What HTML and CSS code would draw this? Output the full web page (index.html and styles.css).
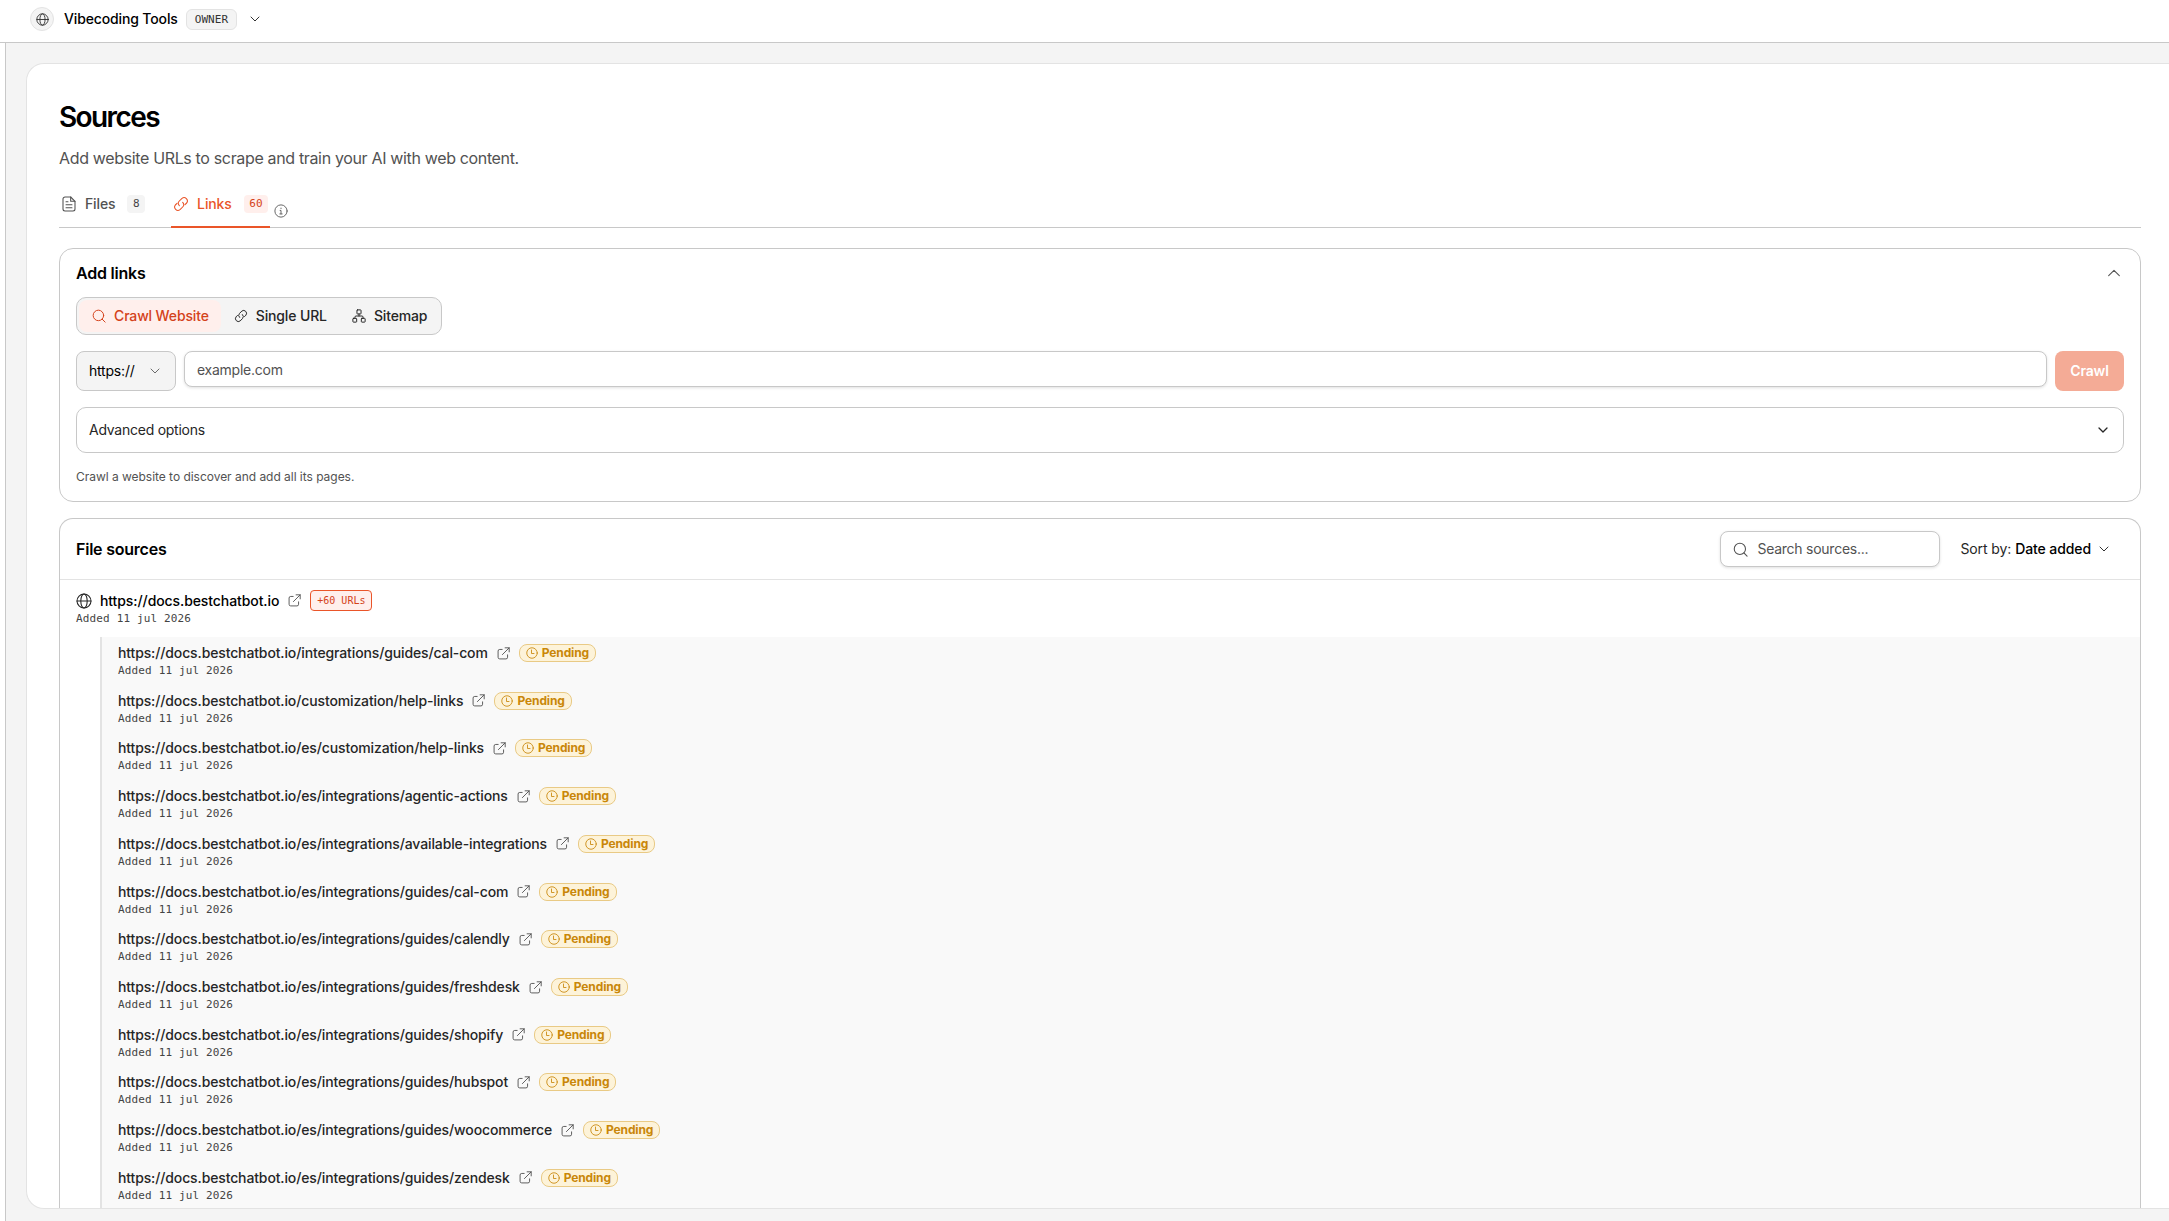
FILE: index.html
```html
<!DOCTYPE html>
<html lang="en">
<head>
<meta charset="utf-8">
<title>Sources</title>
<link rel="stylesheet" href="styles.css">
</head>
<body>
<svg class="sprite" aria-hidden="true">
  <symbol id="globe" viewBox="0 0 24 24"><circle cx="12" cy="12" r="10.500"/><ellipse cx="12" cy="12" rx="4.8" ry="10.500"/><path d="M1.500 12h21"/></symbol>
  <symbol id="down" viewBox="0 0 24 24"><path d="m4 8 8 8 8-8"/></symbol>
  <symbol id="up" viewBox="0 0 24 24"><path d="m4 16 8-8 8 8"/></symbol>
  <symbol id="file" viewBox="0 0 24 24"><path d="M14.5 1.5H6a3 3 0 0 0-3 3v15a3 3 0 0 0 3 3h12a3 3 0 0 0 3-3V8z"/><path d="M14.5 1.5V8H21M7.500 8.500h3M7.500 13h9M7.500 17.500h9"/></symbol>
  <symbol id="link" viewBox="0 0 24 24"><path d="M9.500 14.500a5 5 0 0 1 0-7l4-4a5 5 0 0 1 7 7l-2.500 2.500"/><path d="M14.500 9.500a5 5 0 0 1 0 7l-4 4a5 5 0 0 1-7-7L6 11"/></symbol>
  <symbol id="info" viewBox="0 0 24 24"><circle cx="12" cy="12" r="10.500"/><path d="M10.500 11H12v6M10 17h4M12 7v1"/></symbol>
  <symbol id="search" viewBox="0 0 24 24"><circle cx="11" cy="11" r="9"/><path d="m17.500 17.500 5 5"/></symbol>
  <symbol id="sitemap" viewBox="0 0 24 24"><rect x="8.500" y="1.500" width="7" height="7" rx="1"/><rect x="1.500" y="16" width="6.500" height="6.500" rx="1"/><rect x="16" y="16" width="6.500" height="6.500" rx="1"/><path d="M12 8.500V12M5 16v-2a2 2 0 0 1 2-2h10a2 2 0 0 1 2 2v2"/></symbol>
  <symbol id="external" viewBox="0 0 24 24"><path d="M15 1.500h7.500V9M22.500 1.500 10 14M9.500 4.500H5a3 3 0 0 0-3 3V19a3 3 0 0 0 3 3h11.500a3 3 0 0 0 3-3v-4.500"/></symbol>
  <symbol id="clock" viewBox="0 0 24 24"><circle cx="12" cy="12" r="10.500"/><path d="M11 6v7h5"/></symbol>
</svg>

<header class="topbar">
  <span class="avatar"><svg class="icon i13"><use href="#globe"/></svg></span>
  <span class="workspace">Vibecoding Tools</span>
  <span class="role">OWNER</span>
  <svg class="icon i12 dark"><use href="#down"/></svg>
</header>

<div class="shell">
  <main class="panel">
    <h1>Sources</h1>
    <p class="subtitle">Add website URLs to scrape and train your AI with web content.</p>

    <nav class="tabs">
      <a class="tab"><svg class="icon i16"><use href="#file"/></svg><span>Files</span><b class="count">8</b></a>
      <a class="tab active"><svg class="icon i16"><use href="#link"/></svg><span>Links</span><b class="count">60</b></a>
      <svg class="icon info"><use href="#info"/></svg>
    </nav>

    <section class="card add">
      <div class="card-title"><h2>Add links</h2><svg class="icon i16 muted"><use href="#up"/></svg></div>
      <div class="segments">
        <button class="segment active"><svg class="icon i14"><use href="#search"/></svg>Crawl Website</button>
        <button class="segment"><svg class="icon i14"><use href="#link"/></svg>Single URL</button>
        <button class="segment"><svg class="icon i14"><use href="#sitemap"/></svg>Sitemap</button>
      </div>
      <div class="url-row">
        <div class="protocol">https://<svg class="icon i12 muted"><use href="#down"/></svg></div>
        <input class="field" type="text" placeholder="example.com">
        <button class="crawl">Crawl</button>
      </div>
      <div class="advanced">Advanced options<svg class="icon i12 bold"><use href="#down"/></svg></div>
      <p class="hint">Crawl a website to discover and add all its pages.</p>
    </section>

    <section class="card list">
      <div class="list-head">
        <h2>File sources</h2>
        <div class="tools">
          <label class="search"><svg class="icon i15 muted"><use href="#search"/></svg><input type="text" placeholder="Search sources..."></label>
          <div class="sort"><span>Sort by: <b>Date added</b></span><svg class="icon i12 dark"><use href="#down"/></svg></div>
        </div>
      </div>
      <div class="group">
        <div class="line"><svg class="icon i16"><use href="#globe"/></svg><span class="root">https://docs.bestchatbot.io</span><svg class="icon i13 muted ext"><use href="#external"/></svg><span class="urls">+60 URLs</span></div>
        <div class="date">Added 11 jul 2026</div>
      </div>
      <ul class="children">
        <li><div class="line"><span>https://docs.bestchatbot.io/integrations/guides/cal-com</span><svg class="icon i13 muted ext"><use href="#external"/></svg><span class="pending"><svg class="icon i12"><use href="#clock"/></svg>Pending</span></div><div class="date">Added 11 jul 2026</div></li>
        <li><div class="line"><span>https://docs.bestchatbot.io/customization/help-links</span><svg class="icon i13 muted ext"><use href="#external"/></svg><span class="pending"><svg class="icon i12"><use href="#clock"/></svg>Pending</span></div><div class="date">Added 11 jul 2026</div></li>
        <li><div class="line"><span>https://docs.bestchatbot.io/es/customization/help-links</span><svg class="icon i13 muted ext"><use href="#external"/></svg><span class="pending"><svg class="icon i12"><use href="#clock"/></svg>Pending</span></div><div class="date">Added 11 jul 2026</div></li>
        <li><div class="line"><span>https://docs.bestchatbot.io/es/integrations/agentic-actions</span><svg class="icon i13 muted ext"><use href="#external"/></svg><span class="pending"><svg class="icon i12"><use href="#clock"/></svg>Pending</span></div><div class="date">Added 11 jul 2026</div></li>
        <li><div class="line"><span>https://docs.bestchatbot.io/es/integrations/available-integrations</span><svg class="icon i13 muted ext"><use href="#external"/></svg><span class="pending"><svg class="icon i12"><use href="#clock"/></svg>Pending</span></div><div class="date">Added 11 jul 2026</div></li>
        <li><div class="line"><span>https://docs.bestchatbot.io/es/integrations/guides/cal-com</span><svg class="icon i13 muted ext"><use href="#external"/></svg><span class="pending"><svg class="icon i12"><use href="#clock"/></svg>Pending</span></div><div class="date">Added 11 jul 2026</div></li>
        <li><div class="line"><span>https://docs.bestchatbot.io/es/integrations/guides/calendly</span><svg class="icon i13 muted ext"><use href="#external"/></svg><span class="pending"><svg class="icon i12"><use href="#clock"/></svg>Pending</span></div><div class="date">Added 11 jul 2026</div></li>
        <li><div class="line"><span>https://docs.bestchatbot.io/es/integrations/guides/freshdesk</span><svg class="icon i13 muted ext"><use href="#external"/></svg><span class="pending"><svg class="icon i12"><use href="#clock"/></svg>Pending</span></div><div class="date">Added 11 jul 2026</div></li>
        <li><div class="line"><span>https://docs.bestchatbot.io/es/integrations/guides/shopify</span><svg class="icon i13 muted ext"><use href="#external"/></svg><span class="pending"><svg class="icon i12"><use href="#clock"/></svg>Pending</span></div><div class="date">Added 11 jul 2026</div></li>
        <li><div class="line"><span>https://docs.bestchatbot.io/es/integrations/guides/hubspot</span><svg class="icon i13 muted ext"><use href="#external"/></svg><span class="pending"><svg class="icon i12"><use href="#clock"/></svg>Pending</span></div><div class="date">Added 11 jul 2026</div></li>
        <li><div class="line"><span>https://docs.bestchatbot.io/es/integrations/guides/woocommerce</span><svg class="icon i13 muted ext"><use href="#external"/></svg><span class="pending"><svg class="icon i12"><use href="#clock"/></svg>Pending</span></div><div class="date">Added 11 jul 2026</div></li>
        <li><div class="line"><span>https://docs.bestchatbot.io/es/integrations/guides/zendesk</span><svg class="icon i13 muted ext"><use href="#external"/></svg><span class="pending"><svg class="icon i12"><use href="#clock"/></svg>Pending</span></div><div class="date">Added 11 jul 2026</div></li>
      </ul>
    </section>
  </main>
</div>
</body>
</html>
```
FILE: styles.css
```css
* { box-sizing: border-box; }

:root {
  --line: #c8c8c8;
  --soft-line: #e3e3e3;
  --surface: #f4f4f4;
  --accent: #ea5529;
  --accent-text: #d4421a;
  --accent-soft: #ffefec;
  --text: #262626;
  --muted: #525252;
  --mono: "DejaVu Sans Mono", "Liberation Mono", monospace;
}

body {
  margin: 0;
  height: 1221px;
  overflow: hidden;
  display: flex;
  flex-direction: column;
  background: #fff;
  color: var(--text);
  font: 500 14px/20px Inter, sans-serif;
  letter-spacing: -0.14px;
}

h1, h2, p, ul { margin: 0; padding: 0; }
button, input { font: inherit; color: inherit; letter-spacing: inherit; }
.sprite { display: none; }

.icon { width: 14px; height: 14px; flex: none; fill: none; stroke: currentColor; stroke-width: 1.7; stroke-linecap: round; stroke-linejoin: round; }
.i12 { width: 12px; height: 12px; }
.i13 { width: 13px; height: 13px; }
.i15 { width: 15px; height: 15px; }
.i16 { width: 16px; height: 16px; stroke-width: 1.6; }
.muted { color: var(--muted); }
.dark { color: #333; stroke-width: 2; }
.bold { stroke-width: 2.6; }

.topbar { height: 43px; flex: none; display: flex; align-items: center; padding: 0 0 4px 30px; border-bottom: 1px solid var(--line); color: #000; }
.avatar { width: 24px; height: 24px; display: flex; align-items: center; justify-content: center; border: 1px solid var(--soft-line); border-radius: 50%; background: var(--surface); color: #333; }
.workspace { margin-left: 10px; }
.role { height: 21px; margin: 0 12px 0 8px; padding: 0 8px; border: 1px solid var(--soft-line); border-radius: 6px; background: var(--surface); color: #333; font: 400 11px/19px var(--mono); letter-spacing: 0.1px; }

.shell { flex: 1; min-height: 0; margin-left: 5px; padding: 20px 0 12px 20px; border-left: 1px solid var(--line); background: var(--surface); }
.panel { height: 1146px; overflow: hidden; padding: 35px 28px 0 32px; border: 1px solid var(--soft-line); border-right: 0; border-radius: 18px 0 0 18px; background: #fff; }

h1 { color: #000; font-size: 28px; font-weight: 600; line-height: 36px; letter-spacing: -1.6px; }
.subtitle { margin-top: 11px; color: var(--muted); font-size: 16px; font-weight: 400; line-height: 24px; letter-spacing: -0.345px; }

.tabs { height: 43px; margin-top: 15px; display: flex; border-bottom: 1px solid var(--line); }
.tab { height: 43px; display: flex; align-items: center; padding: 0 2px 6px; margin-right: 24px; color: var(--muted); }
.tab span { margin: 0 12px 0 8px; }
.tab.active { color: var(--accent); padding-bottom: 4px; border-bottom: 2px solid var(--accent); margin-right: 4px; }
.count { height: 18px; padding: 0 5.5px; border-radius: 4px; background: var(--surface); color: #444; font: 400 11px/18px var(--mono); letter-spacing: 0.1px; }
.active .count { background: var(--accent-soft); color: var(--accent-text); }
.info { margin-top: 19px; color: #666; }

.card { border: 1px solid var(--line); border-radius: 14px; }
.add { height: 254px; margin-top: 20px; padding: 14px 16px; }
h2 { color: #000; font-size: 16px; font-weight: 600; line-height: 20px; letter-spacing: -0.22px; }
.card-title { display: flex; justify-content: space-between; align-items: center; padding-right: 2px; }

.segments { width: max-content; height: 38px; margin-top: 14px; padding: 2px; display: flex; border: 1px solid var(--line); border-radius: 10px; background: var(--surface); }
.segment { display: flex; align-items: center; gap: 8px; padding: 0 12px 0 13px; border: 0; border-radius: 8px; background: none; }
.segment.active { background: var(--accent-soft); color: var(--accent-text); }

.url-row { margin-top: 16px; display: flex; gap: 8px; }
.protocol { width: 100px; height: 40px; display: flex; align-items: center; justify-content: space-between; padding: 0 14px 0 12px; border: 1px solid var(--line); border-radius: 8px; background: var(--surface); color: #000; font-weight: 400; letter-spacing: -0.2px; }
.field, .search { border: 1px solid var(--line); border-radius: 8px; background: #fff; box-shadow: 0 1px 3px #0000001f; font-weight: 400; letter-spacing: -0.25px; }
.field { flex: 1; height: 36px; padding: 0 12px; }
::placeholder { color: var(--muted); opacity: 1; }
.crawl { width: 69px; height: 40px; border: 0; border-radius: 8px; background: #f4ab96; color: #fff; font-weight: 600; }
.advanced { height: 46px; margin-top: 16px; padding: 0 14px 0 12px; display: flex; align-items: center; justify-content: space-between; border: 1px solid var(--line); border-radius: 10px; font-weight: 400; letter-spacing: -0.25px; }
.hint { margin-top: 15px; color: var(--muted); font-size: 12px; font-weight: 400; line-height: 18px; letter-spacing: -0.03px; }

.list { margin-top: 16px; border-bottom: 0; border-radius: 14px 14px 0 0; }
.list-head { height: 61px; padding: 0 16px; display: flex; align-items: center; justify-content: space-between; border-bottom: 1px solid var(--soft-line); }
.tools { display: flex; align-items: center; gap: 20px; }
.search { width: 220px; height: 36px; display: flex; align-items: center; gap: 9px; padding: 0 12px; }
.search input { width: 160px; padding: 0; border: 0; outline: 0; background: none; }
.sort { display: flex; align-items: center; gap: 7px; padding-right: 14px; font-weight: 400; letter-spacing: -0.09px; }
.sort b { color: #000; font-weight: 500; }

.group { height: 57px; padding: 10px 16px 0; }
.line { display: flex; align-items: center; letter-spacing: -0.13px; }
.group .line { height: 21px; }
.root { margin-left: 8px; color: #000; letter-spacing: -0.09px; }
.ext { margin: 0 9px; }
.urls { height: 21px; padding: 0 6px; border: 1px solid var(--accent); border-radius: 4px; background: var(--accent-soft); color: var(--accent-text); font: 400 10px/19px var(--mono); letter-spacing: 0; }
.date { color: #444; font: 400 11px/16px var(--mono); letter-spacing: 0.15px; }

.children { margin-left: 40px; border-left: 2px solid var(--soft-line); background: #f9f9f9; list-style: none; }
.children li { height: 47.73px; padding: 7px 16px 0; }
.children .line { height: 18px; margin-bottom: 1px; }
.pending { height: 18px; padding: 0 6px 0 6px; display: flex; align-items: center; gap: 4px; border: 1px solid #e9ca85; border-radius: 8px; background: #fdf3d9; color: #c98709; font-size: 12px; font-weight: 700; line-height: 16px; }
```
